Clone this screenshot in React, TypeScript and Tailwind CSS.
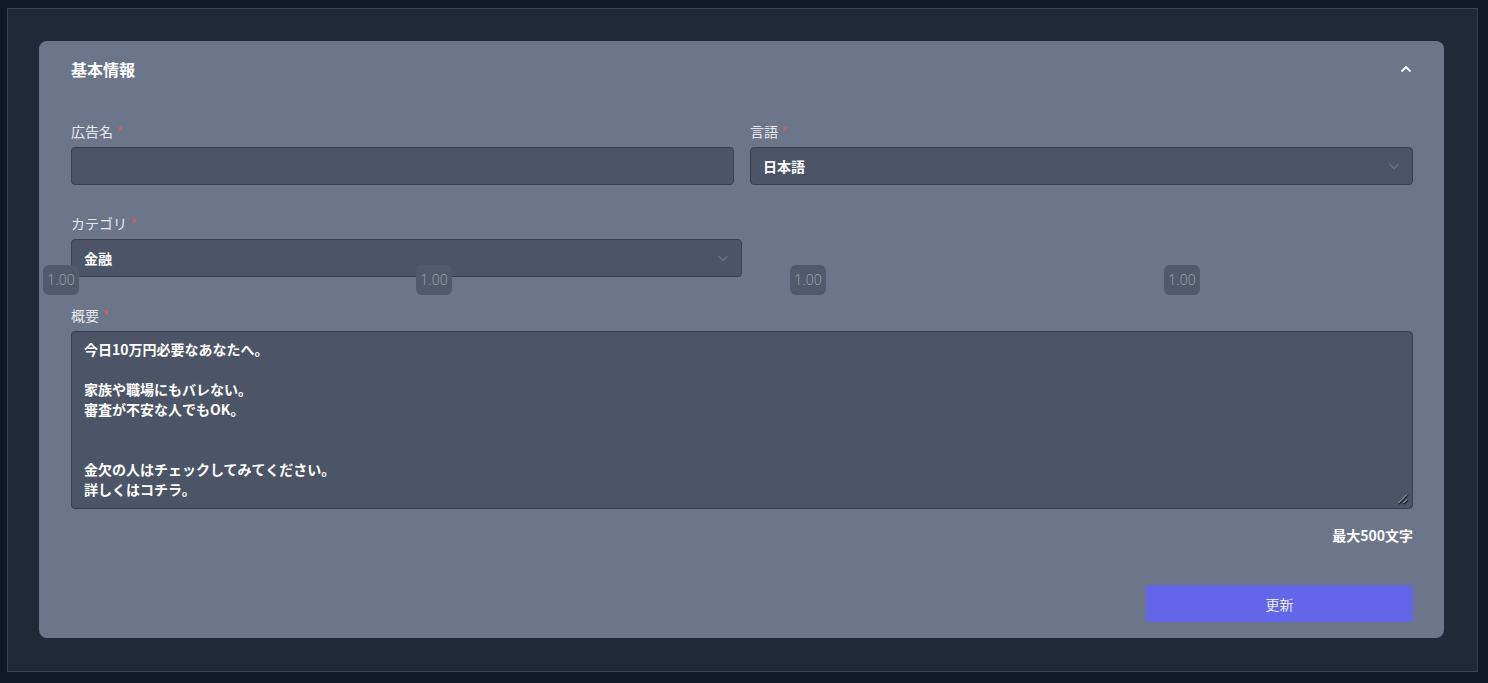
import React from "react";

const font = { fontFamily: '"Noto Sans CJK JP", "Noto Sans", sans-serif' };

function ChevronDown() {
  return (
    <svg width="12" height="8" viewBox="0 0 12 8" fill="none" className="text-[#6b7280]">
      <path d="M1.5 2l4.5 4.5L10.5 2" stroke="currentColor" strokeWidth="1.3" />
    </svg>
  );
}

function ChevronUp() {
  return (
    <svg width="12" height="8" viewBox="0 0 12 8" fill="none" className="text-white">
      <path d="M1.5 6.5L6 2l4.5 4.5" stroke="currentColor" strokeWidth="1.8" />
    </svg>
  );
}

function Label({ children }: { children: React.ReactNode }) {
  return (
    <div className="text-sm leading-5 text-[#e5e7eb] mb-1.5">
      {children} <span className="text-[#e0545c]">*</span>
    </div>
  );
}

function Badge() {
  return (
    <div className="w-9 h-[30px] rounded-md bg-[#525b6d] flex items-center justify-center text-sm text-[#9ca3af] font-light" style={{ fontFamily: '"Open Sans", sans-serif' }}>
      1.00
    </div>
  );
}

export default function App() {
  const lines = [
    "今日10万円必要なあなたへ。",
    "",
    "家族や職場にもバレない。",
    "審査が不安な人でもOK。",
    "",
    "",
    "金欠の人はチェックしてみてください。",
    "詳しくはコチラ。",
  ];
  return (
    <div className="w-[1488px] h-[683px] bg-[#111827] overflow-hidden relative" style={font}>
      <div className="absolute left-[7px] top-[8px] w-[1471px] h-[664px] bg-[#1f2937] border border-[#3a4457] pl-[31px] pt-8">
        <div className="bg-[#6b768b] rounded-lg w-[1405px] h-[597px] pl-8 pr-[31px] flex flex-col">
          <div className="h-[55px] flex items-center justify-between">
            <div className="text-base font-bold text-white">基本情報</div>
            <div className="mr-[1px]"><ChevronUp /></div>
          </div>
          <div className="pt-[25px]">
            <div className="grid grid-cols-2 gap-4">
              <div>
                <Label>広告名</Label>
                <div className="h-[38px] rounded bg-[#4b5567] border border-[#374151]"></div>
              </div>
              <div>
                <Label>言語</Label>
                <div className="h-[38px] rounded bg-[#4b5567] border border-[#374151] flex items-center justify-between pl-3 pr-3">
                  <span className="text-sm font-bold text-white">日本語</span>
                  <ChevronDown />
                </div>
              </div>
            </div>
            <div className="mt-[28px] w-[671px]">
              <Label>カテゴリ</Label>
              <div className="h-[38px] rounded bg-[#4b5567] border border-[#374151] flex items-center justify-between pl-3 pr-3">
                <span className="text-sm font-bold text-white">金融</span>
                <ChevronDown />
              </div>
            </div>
            <div className="mt-[28px]">
              <Label>概要</Label>
              <div className="relative h-[178px] rounded bg-[#4b5567] border border-[#374151] px-3 pt-[7px]">
                {lines.map((l, i) => (
                  <div key={i} className="text-sm leading-5 font-bold text-white h-5">{l}</div>
                ))}
                <svg className="absolute right-[3px] bottom-[3px]" width="12" height="12" viewBox="0 0 12 12">
                  <path d="M2 11L11 2" stroke="#1f2937" strokeWidth="2" />
                  <path d="M7 11L11 7" stroke="#1f2937" strokeWidth="2" />
                  <path d="M1.5 10L10 1.5" stroke="#d1d5db" strokeWidth="0.8" />
                  <path d="M6.5 10L10 6.5" stroke="#d1d5db" strokeWidth="0.8" />
                </svg>
              </div>
            </div>
            <div className="mt-4 text-right text-sm leading-5 font-bold text-white">最大500文字</div>
            <div className="mt-[40px] flex justify-end">
              <button className="w-[267px] h-[37px] rounded bg-[#6366e9] text-sm text-[#e5e7eb]">更新</button>
            </div>
          </div>
        </div>
      </div>
      <div className="absolute left-[43px] top-[265px]"><Badge /></div>
      <div className="absolute left-[416px] top-[265px]"><Badge /></div>
      <div className="absolute left-[790px] top-[265px]"><Badge /></div>
      <div className="absolute left-[1164px] top-[265px]"><Badge /></div>
    </div>
  );
}
